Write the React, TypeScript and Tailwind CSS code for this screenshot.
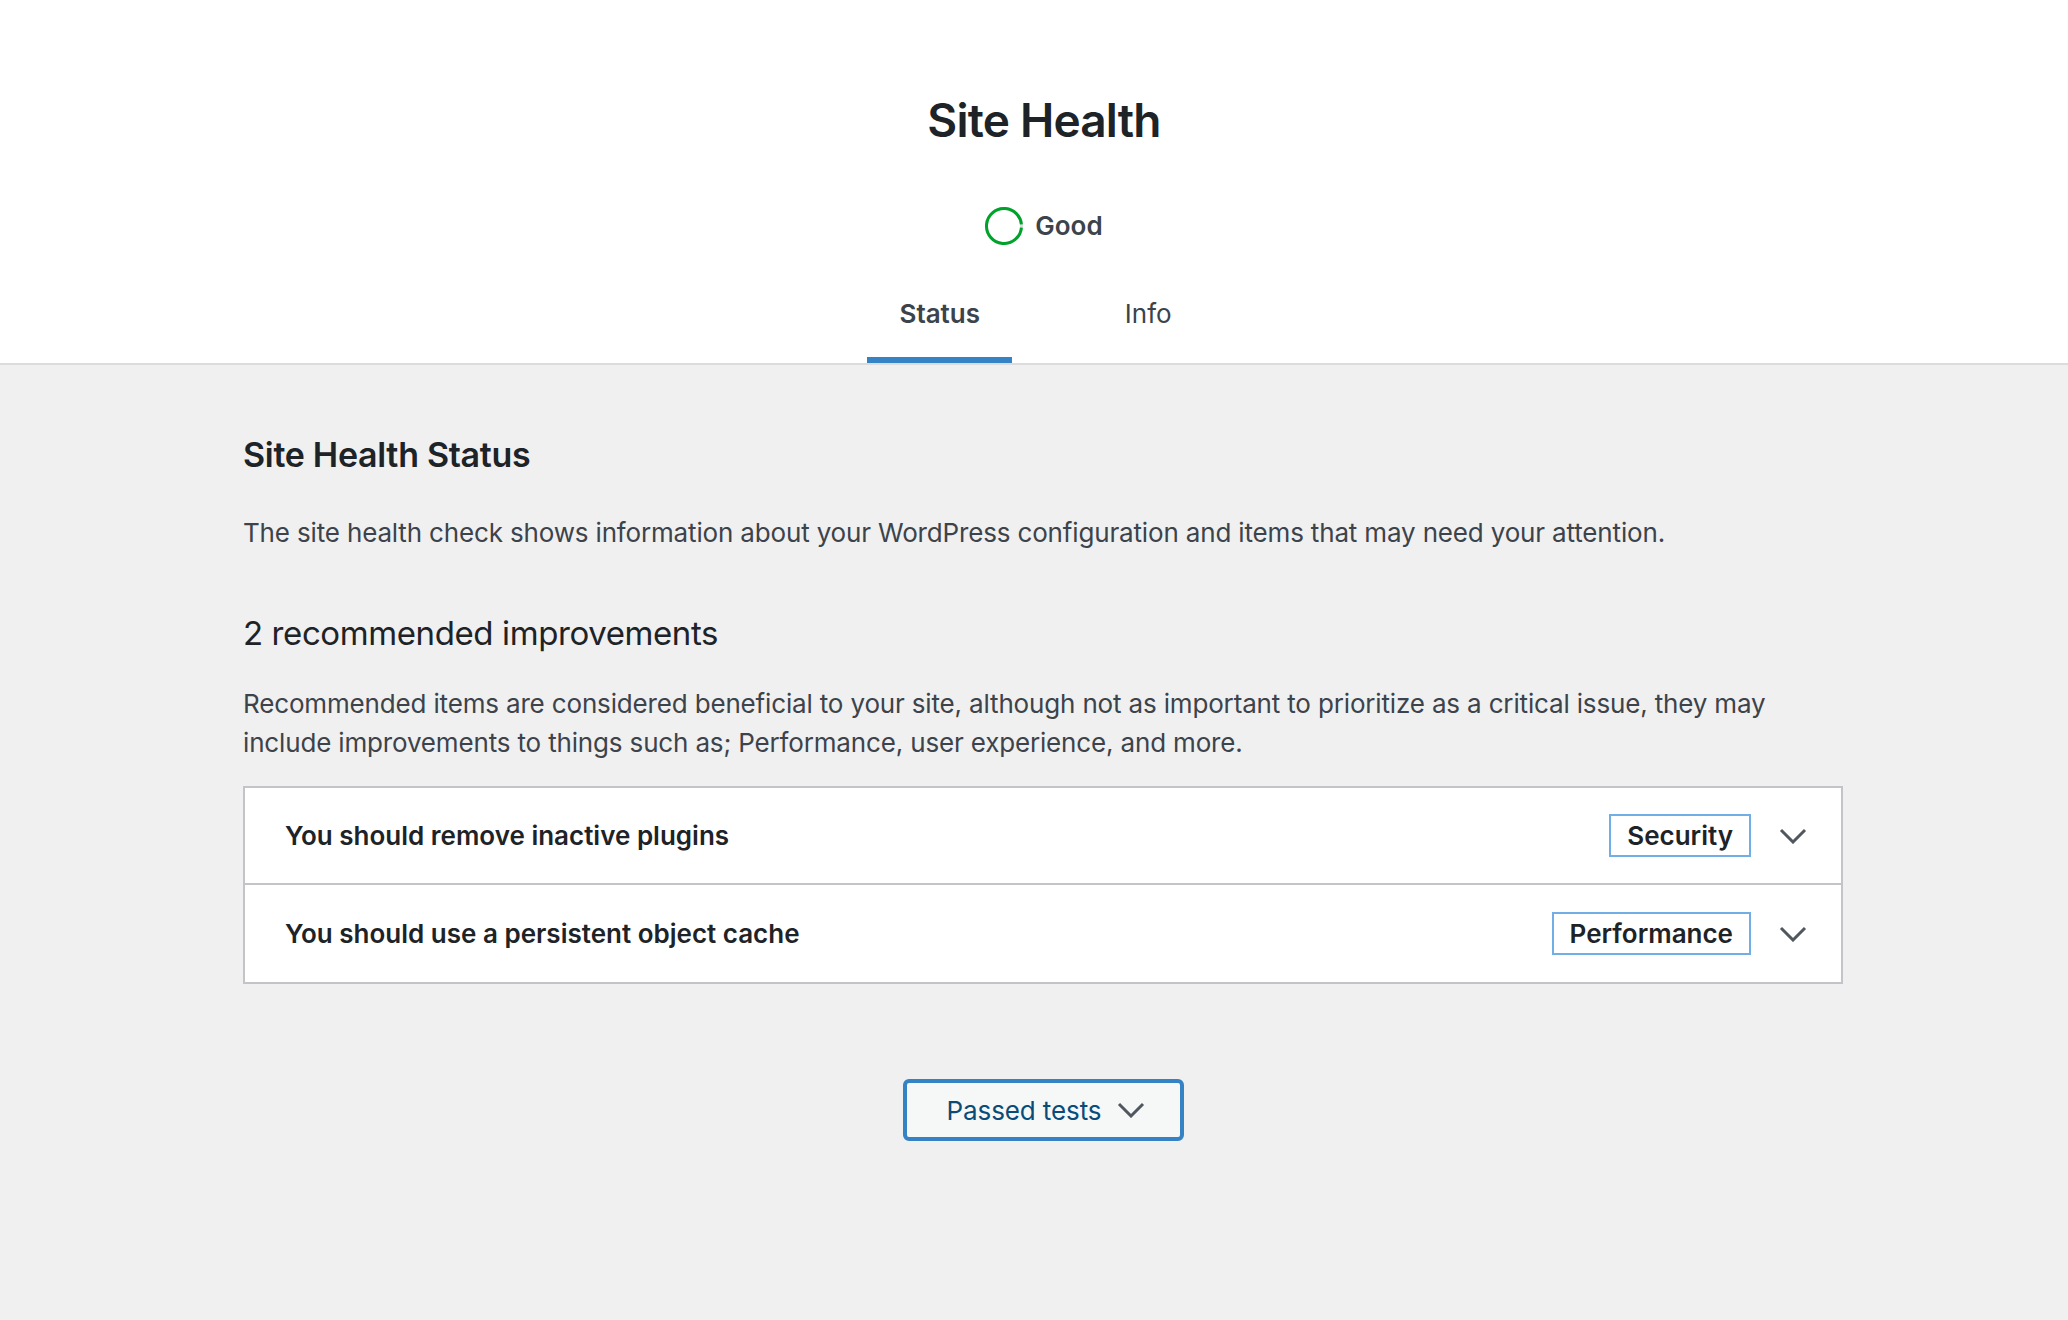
import React from "react";

const Chevron = ({ className = "" }: { className?: string }) => (
  <svg width="28" height="16" viewBox="0 0 28 16" className={className} fill="none">
    <polyline points="2,2 14,14 26,2" stroke="#50575e" strokeWidth="3" strokeLinecap="butt" strokeLinejoin="miter" />
  </svg>
);

const Row = ({ title, badge, last }: { title: string; badge: string; last?: boolean }) => (
  <div className={`flex items-center h-[97px] bg-white pl-[40px] pr-[34px] ${last ? "" : "border-b-2 border-[#c3c4c7]"}`}>
    <div className="flex-1 text-[26px] leading-[39px] font-semibold text-[#1d2327]">{title}</div>
    <div className="h-[43px] px-[16px] border-2 border-[#72aee6] flex items-center text-[26px] font-semibold text-[#1d2327]">
      {badge}
    </div>
    <Chevron className="ml-[28px]" />
  </div>
);

export default function App() {
  return (
    <div className="min-h-[1320px] bg-[#f0f0f1]" style={{ fontFamily: "Inter, 'Noto Sans', sans-serif" }}>
      <div className="bg-white border-b-2 border-[#dcdcde] pl-[20px]">
        <div className="flex flex-col items-center">
          <h1 className="mt-[92px] text-[46px] leading-[56px] font-semibold text-[#1d2327] tracking-[-0.8px]">Site Health</h1>
          <div className="mt-[59px] flex items-center h-[38px]">
            <svg width="38" height="38" viewBox="0 0 38 38">
              <circle cx="19" cy="19" r="17.5" fill="none" stroke="#dcdcde" strokeWidth="3" />
              <circle
                cx="19"
                cy="19"
                r="17.5"
                fill="none"
                stroke="#00a32a"
                strokeWidth="3"
                strokeDasharray="106 110"
                transform="rotate(5 19 19)"
              />
            </svg>
            <span className="ml-[12px] text-[26px] leading-[38px] font-semibold text-[#3c434a]">Good</span>
          </div>
          <div className="mt-[50px] grid grid-cols-2">
            <div className="mx-[32px] px-[32px] pb-[24px] border-b-[6px] border-[#3582c4] text-center text-[26px] leading-[38px] font-semibold text-[#3c434a]">
              Status
            </div>
            <div className="mx-[32px] px-[32px] pb-[24px] border-b-[6px] border-transparent text-center text-[26px] leading-[38px] text-[#3c434a]">
              Info
            </div>
          </div>
        </div>
      </div>

      <div className="w-[1600px]" style={{ marginLeft: "243px" }}>
        <h2 className="mt-[68px] text-[34px] leading-[44px] font-semibold text-[#1d2327] tracking-[-0.3px]">Site Health Status</h2>
        <p className="mt-[36px] text-[26px] leading-[39px] text-[#3c434a] tracking-[-0.16px]">
          The site health check shows information about your WordPress configuration and items that may need your attention.
        </p>
        <h3 className="mt-[59px] text-[33px] leading-[44px] font-normal text-[#1d2327] tracking-[-0.4px]">2 recommended improvements</h3>
        <p className="mt-[29px] text-[26px] leading-[39px] text-[#3c434a] tracking-[-0.16px]">
          Recommended items are considered beneficial to your site, although not as important to prioritize as a critical issue, they may include improvements to things such as; Performance, user experience, and more.
        </p>
        <div className="mt-[24px] border-2 border-[#c3c4c7]">
          <Row title="You should remove inactive plugins" badge="Security" />
          <Row title="You should use a persistent object cache" badge="Performance" last />
        </div>
        <div className="mt-[95px] flex justify-center">
          <button className="h-[62px] w-[281px] rounded-[6px] border-[4px] border-[#3582c4] bg-[#f6f7f7] flex items-center justify-center gap-[16px] pl-[6px] text-[26px] text-[#0a4b78] tracking-[-0.1px]">
            <span>Passed tests</span>
            <Chevron />
          </button>
        </div>
      </div>
    </div>
  );
}
